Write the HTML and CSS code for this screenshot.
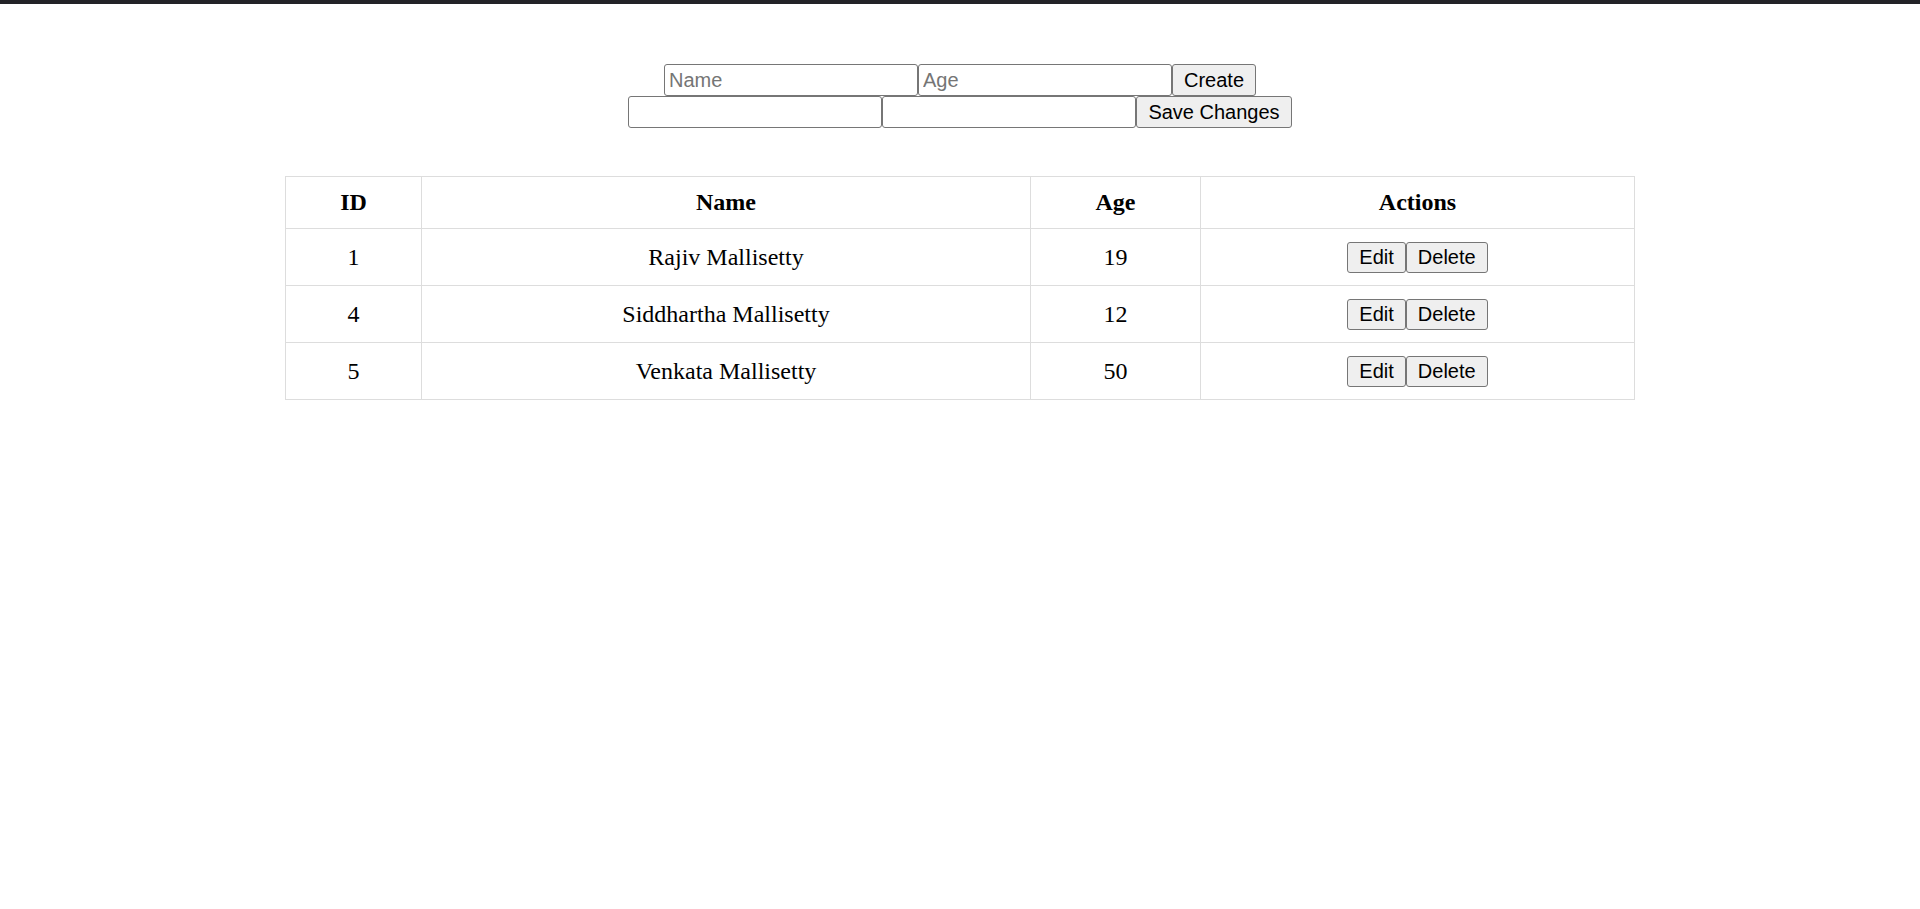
FILE: index.html
```html
<!DOCTYPE html>
<html lang="en">
<head>
<meta charset="utf-8">
<title>Users</title>
<link rel="stylesheet" href="styles.css">
</head>
<body>
<div class="topbar"></div>
<main class="page">
  <div class="forms">
    <div class="form-row">
      <input class="field" type="text" placeholder="Name"><input class="field" type="text" placeholder="Age"><button class="btn">Create</button>
    </div>
    <div class="form-row">
      <input class="field" type="text"><input class="field" type="text"><button class="btn">Save Changes</button>
    </div>
  </div>
  <table class="users">
    <colgroup>
      <col class="c-id"><col class="c-name"><col class="c-age"><col class="c-actions">
    </colgroup>
    <thead>
      <tr><th>ID</th><th>Name</th><th>Age</th><th>Actions</th></tr>
    </thead>
    <tbody>
      <tr><td>1</td><td>Rajiv Mallisetty</td><td>19</td><td><div class="actions"><button class="btn btn-sm">Edit</button><button class="btn btn-sm">Delete</button></div></td></tr>
      <tr><td>4</td><td>Siddhartha Mallisetty</td><td>12</td><td><div class="actions"><button class="btn btn-sm">Edit</button><button class="btn btn-sm">Delete</button></div></td></tr>
      <tr><td>5</td><td>Venkata Mallisetty</td><td>50</td><td><div class="actions"><button class="btn btn-sm">Edit</button><button class="btn btn-sm">Delete</button></div></td></tr>
    </tbody>
  </table>
</main>
</body>
</html>
```
FILE: styles.css
```css
html, body {
  margin: 0;
  padding: 0;
  background: #ffffff;
}
body {
  font-family: "Liberation Serif", "Times New Roman", serif;
  color: #000;
}
.topbar {
  height: 4px;
  background: #232327;
}
.page {
  padding-top: 60px;
}
.forms {
  display: flex;
  flex-direction: column;
  align-items: center;
}
.form-row {
  display: flex;
  justify-content: center;
}
.field {
  box-sizing: border-box;
  width: 254px;
  height: 32px;
  margin: 0;
  padding: 0 4px;
  border: 1px solid #767676;
  border-radius: 3px;
  font-family: "Liberation Sans", Arial, sans-serif;
  font-size: 20px;
  color: #000;
  background: #fff;
}
.field::placeholder {
  color: #757575;
}
.btn {
  box-sizing: border-box;
  height: 32px;
  margin: 0;
  padding: 0 11px;
  border: 1px solid #767676;
  border-radius: 3px;
  background: #efefef;
  font-family: "Liberation Sans", Arial, sans-serif;
  font-size: 20px;
  color: #000;
}
.btn-sm {
  height: 31px;
}
.users {
  margin: 48px auto 0;
  width: 1349px;
  border-collapse: collapse;
  table-layout: fixed;
  font-size: 24px;
}
.c-id { width: 136px; }
.c-name { width: 609px; }
.c-age { width: 170px; }
.c-actions { width: 434px; }
.users th,
.users td {
  border: 1px solid #dddddd;
  text-align: center;
  vertical-align: middle;
  padding: 0;
}
.users th {
  height: 51px;
  font-weight: bold;
}
.users td {
  height: 56px;
}
.actions {
  display: flex;
  justify-content: center;
}
```
